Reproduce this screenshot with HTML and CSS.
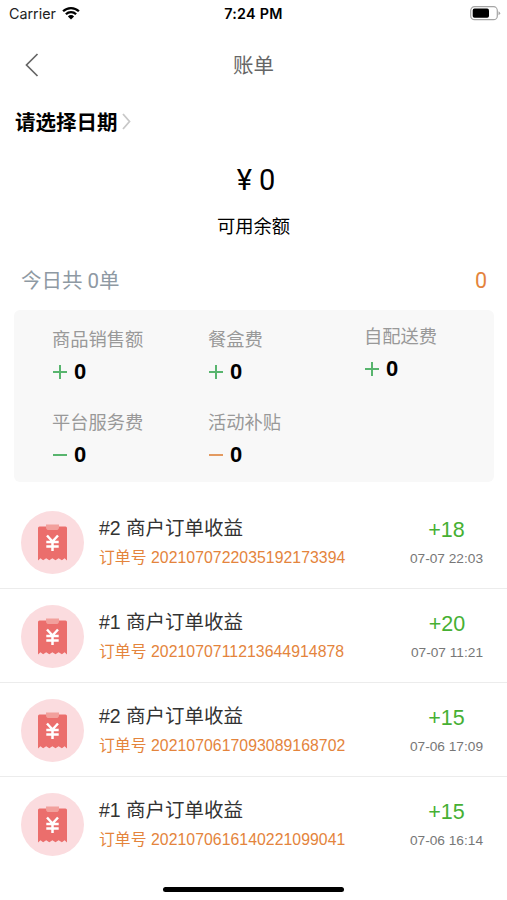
FILE: index.html
```
<!DOCTYPE html>
<html lang="zh-CN">
<head>
  <meta charset="UTF-8" />
  <meta name="viewport" content="width=device-width, initial-scale=1.0" />
  <title>账单</title>
  <link rel="stylesheet" href="styles.css">
</head>
<body>
  <svg width="0" height="0" class="defs">
    <symbol id="bill" viewBox="0 0 63 63">
      <circle cx="31.5" cy="31.5" r="31.5" fill="#fbdcdf"/>
      <path d="M18.5 15.5h26a1.5 1.5 0 0 1 1.5 1.5v32.4l-2.4-2.2-2.7 2-3.3-2-3.1 2-3.1-2-3.1 2-3.1-2-3.1 2-2.6-2-2.5 2.2V17a1.5 1.5 0 0 1 1.5-1.5z" fill="#eb6e6c"/>
      <path d="M25 13.5h13v2.7a2.8 2.8 0 0 1-2.8 2.8h-7.4a2.8 2.8 0 0 1-2.8-2.8z" fill="#f2a09c"/>
      <path d="M26 24.5l5.5 6 5.5-6M25.3 31h12.4M25.3 35.5h12.4M31.5 30.5v9.5" fill="none" stroke="#fff" stroke-width="2.5"/>
    </symbol>
  </svg>

  <div class="statusbar">
    <div class="carrier">Carrier
      <svg width="18" height="14" viewBox="0 0 18 14"><path d="M1.1 5.3a11.2 11.2 0 0 1 15.8 0M3.9 8.2a7.2 7.2 0 0 1 10.2 0" fill="none" stroke="#000" stroke-width="2.3"/><path d="M9 13.6L5.9 10.4a4.4 4.4 0 0 1 6.2 0z"/></svg>
    </div>
    <div class="time">7:24 PM</div>
    <div class="battery">
      <svg width="31" height="15" viewBox="0 0 31 15"><rect x=".7" y=".7" width="26.6" height="13" rx="3.8" fill="none" stroke="#a5a5a5" stroke-width="1.2"/><rect x="2.7" y="2.6" width="16.3" height="9.2" rx="1.8"/><path d="M28.5 5.2q3.4 2 0 4z" fill="#a5a5a5"/></svg>
    </div>
  </div>

  <div class="navbar">
    <svg class="back" width="14" height="24" viewBox="0 0 14 24"><path d="M12.5 1L1.5 12l11 11" fill="none" stroke="#666" stroke-width="1.7"/></svg>
    <h1>账单</h1>
  </div>

  <div class="date-picker">请选择日期
    <svg width="9" height="17" viewBox="0 0 9 17"><path d="M1 1l6.5 7.5L1 16" fill="none" stroke="#c8c8c8" stroke-width="1.8"/></svg>
  </div>

  <div class="balance">
    <div class="balance-value"><span>¥</span><span>0</span></div>
    <div class="balance-label">可用余额</div>
  </div>

  <div class="today"><span>今日共 0单</span><span class="today-total">0</span></div>

  <div class="summary">
    <div class="item"><div class="label">商品销售额</div><div class="value"><i class="sign plus"></i>0</div></div>
    <div class="item"><div class="label">餐盒费</div><div class="value"><i class="sign plus"></i>0</div></div>
    <div class="item raised"><div class="label">自配送费</div><div class="value"><i class="sign plus"></i>0</div></div>
    <div class="item"><div class="label">平台服务费</div><div class="value"><i class="sign"></i>0</div></div>
    <div class="item"><div class="label">活动补贴</div><div class="value"><i class="sign orange"></i>0</div></div>
  </div>

  <div class="list">
    <div class="row">
      <svg class="icon"><use href="#bill"/></svg>
      <div class="info"><div class="title">#2 商户订单收益</div><div class="order">订单号 2021070722035192173394</div></div>
      <div class="side"><div class="amount">+18</div><div class="when">07-07 22:03</div></div>
    </div>
    <div class="row">
      <svg class="icon"><use href="#bill"/></svg>
      <div class="info"><div class="title">#1 商户订单收益</div><div class="order">订单号 2021070711213644914878</div></div>
      <div class="side"><div class="amount">+20</div><div class="when">07-07 11:21</div></div>
    </div>
    <div class="row">
      <svg class="icon"><use href="#bill"/></svg>
      <div class="info"><div class="title">#2 商户订单收益</div><div class="order">订单号 2021070617093089168702</div></div>
      <div class="side"><div class="amount">+15</div><div class="when">07-06 17:09</div></div>
    </div>
    <div class="row">
      <svg class="icon"><use href="#bill"/></svg>
      <div class="info"><div class="title">#1 商户订单收益</div><div class="order">订单号 2021070616140221099041</div></div>
      <div class="side"><div class="amount">+15</div><div class="when">07-06 16:14</div></div>
    </div>
  </div>
  <div class="home-bar"></div>
</body>
</html>
```
FILE: styles.css
```
*{margin:0;padding:0;box-sizing:border-box}
body{width:507px;height:900px;overflow:hidden;background:#fff;color:#000;font-family:"Liberation Sans","Noto Sans CJK SC",sans-serif;display:flex;flex-direction:column}
svg{display:block;flex:none}
.defs{position:absolute}

.statusbar{height:28px;padding:0 6px 0 9px;display:grid;grid-template-columns:1fr auto 1fr;align-items:center;font:14.3px/28px Inter,sans-serif}
.carrier{display:flex;align-items:center;gap:6px;color:#222}
.carrier svg{margin-top:-2px}
.time{font-weight:600;letter-spacing:.3px;margin-right:3px}
.battery{display:flex;justify-content:flex-end;margin-top:-2px}

.navbar{height:74px;display:grid;grid-template-columns:1fr auto 1fr;align-items:center;padding-left:25px;padding-right:25px}
.navbar h1{grid-column:2;padding-top:2px;font-size:20.5px;line-height:30px;font-weight:400;color:#666}

.date-picker{height:38px;padding-left:15px;display:flex;align-items:center;gap:4px;font-size:20.5px;font-weight:700}

.balance{height:112px;padding-top:22px;text-align:center}
.balance-value{display:flex;justify-content:center;gap:7px;padding-left:5px;font:29px/36px Roboto,sans-serif}
.balance-label{margin-top:14px;font-size:18.3px;line-height:30px}

.today{height:58px;padding:0 20px 0 21px;display:flex;justify-content:space-between;align-items:center;font:20.5px/30px Roboto,"Noto Sans CJK SC",sans-serif;color:#8e99a3}
.today-total{font-size:21.5px;color:#e4843c}

.summary{height:172px;margin:0 13px 0 14px;padding:15px 0 0 38px;background:#f8f8f8;border-radius:6px;display:grid;grid-template-columns:156px 156px 1fr;grid-auto-rows:82.5px;flex:none}
.raised{margin-top:-3px}
.label{padding-top:1px;font-size:18.3px;line-height:28px;color:#999}
.value{display:flex;align-items:center;gap:7px;height:36px;padding-left:1px;font-size:22px;font-weight:700}
.sign{width:14px;height:14px;background:linear-gradient(#58b56e,#58b56e) center/100% 2px no-repeat}
.plus{background:linear-gradient(#58b56e,#58b56e) center/100% 2px no-repeat,linear-gradient(#58b56e,#58b56e) center/2px 100% no-repeat}
.orange{background:linear-gradient(#e39a61,#e39a61) center/100% 2px no-repeat}

.list{padding-top:13px}
.row{height:94px;padding:1px 24px 0 21px;display:flex;align-items:center;border-bottom:1px solid #ececec}
.row:last-child{border-bottom-color:#fff}
.icon{width:63px;height:63px}
.info{margin-left:15px;flex:1}
.title{font-size:19.5px;line-height:30px;color:#333}
.order{font-size:15.8px;line-height:29px;letter-spacing:.05px;color:#e4843c}
.side{display:flex;flex-direction:column;align-items:center;padding-top:4px}
.amount{font-size:21.5px;line-height:29px;color:#46b033}
.when{font-size:13.7px;line-height:27px;color:#777}

.home-bar{width:181px;height:5px;margin:16px auto 0;border-radius:3px;background:#000;flex:none}
```
